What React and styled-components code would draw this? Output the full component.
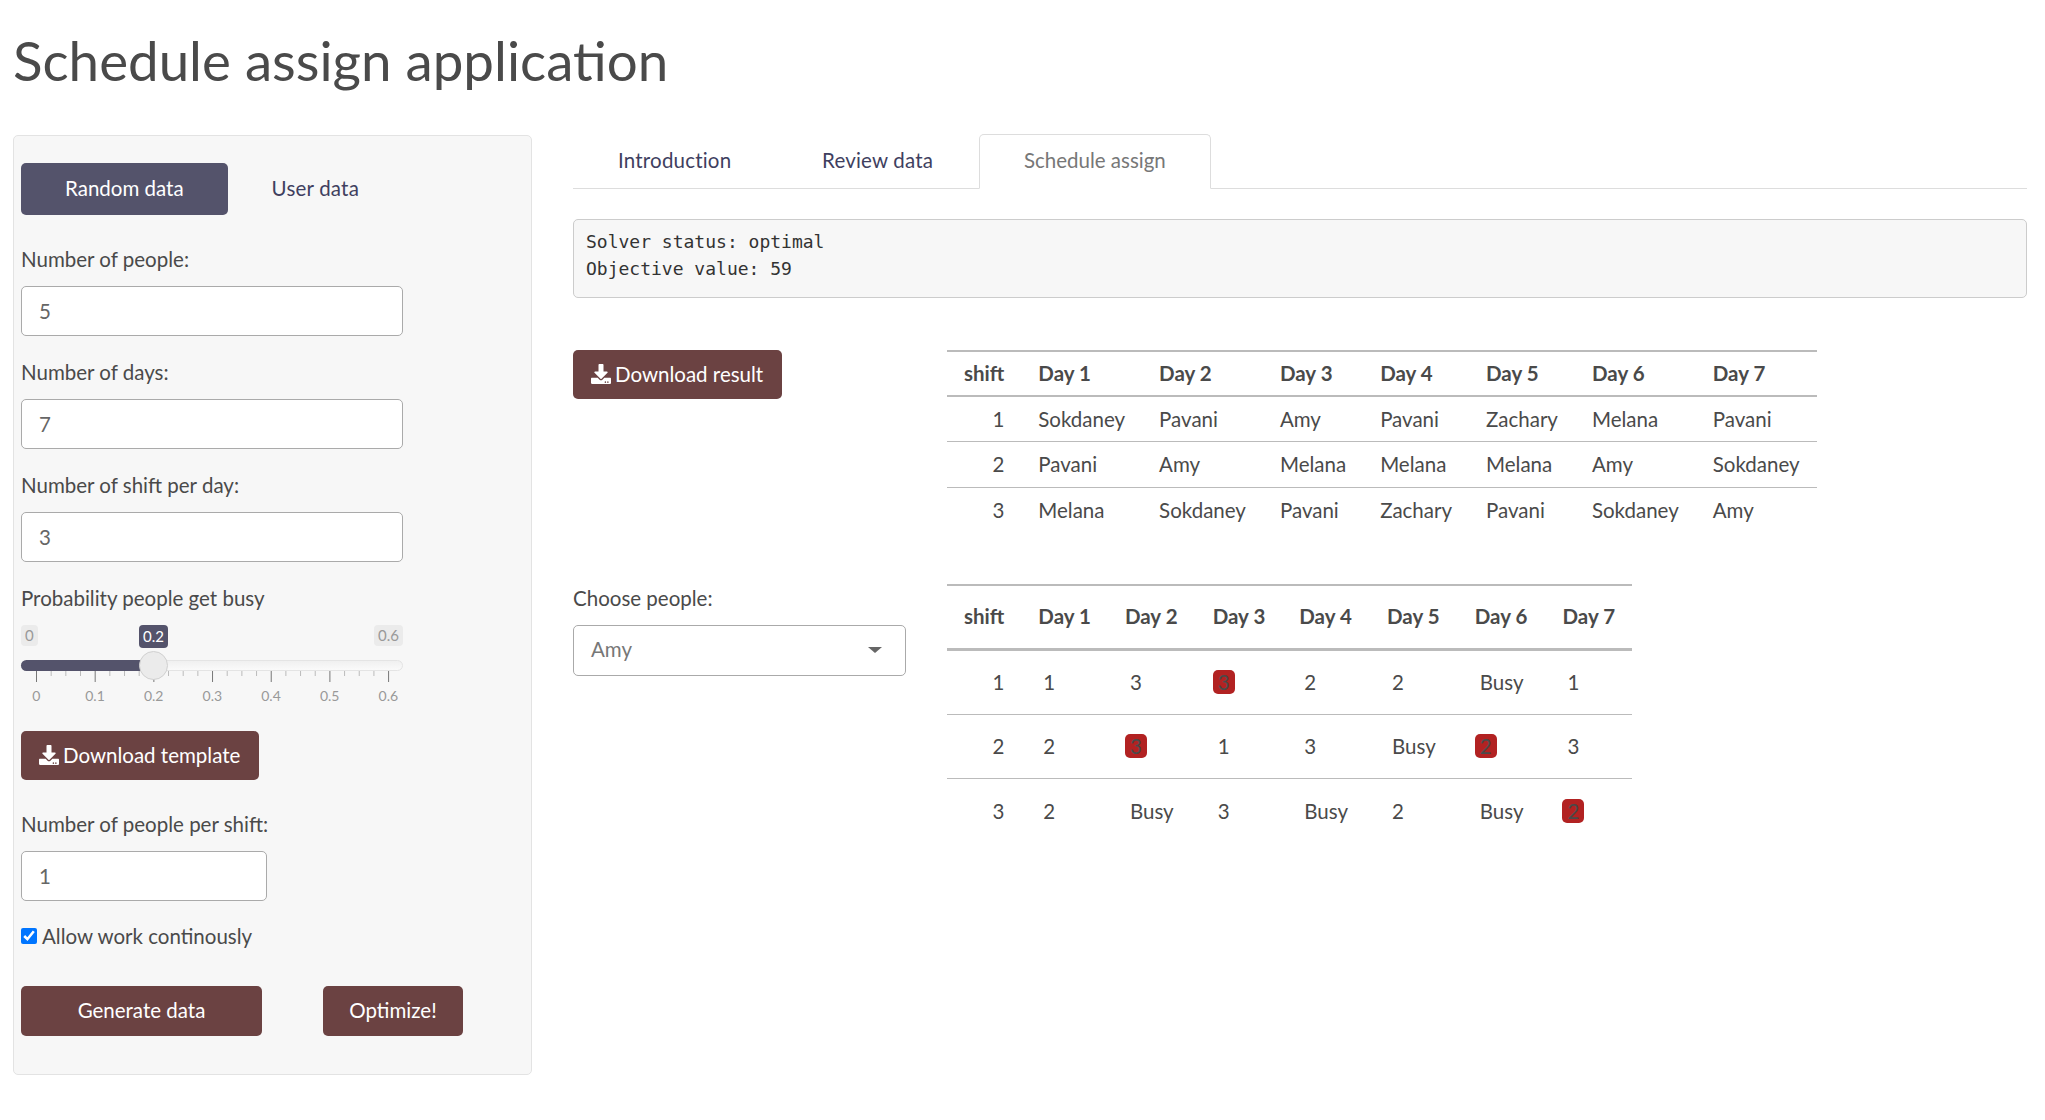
import React from "react";
import styled, { createGlobalStyle } from "styled-components";
import { FaDownload } from "react-icons/fa";

const scheduleHead = ["shift", "Day 1", "Day 2", "Day 3", "Day 4", "Day 5", "Day 6", "Day 7"];
const scheduleRows = [
    [1, "Sokdaney", "Pavani", "Amy", "Pavani", "Zachary", "Melana", "Pavani"],
    [2, "Pavani", "Amy", "Melana", "Melana", "Melana", "Amy", "Sokdaney"],
    [3, "Melana", "Sokdaney", "Pavani", "Zachary", "Pavani", "Sokdaney", "Amy"],
];
// "!" marks a cell that clashes with the preference
const preferenceRows = [
    [1, "1", "3", "3!", "2", "2", "Busy", "1"],
    [2, "2", "3!", "1", "3", "Busy", "2!", "3"],
    [3, "2", "Busy", "3", "Busy", "2", "Busy", "2!"],
];
const sliderLabels = ["0", "0.1", "0.2", "0.3", "0.4", "0.5", "0.6"];

function SliderTicks() {
    const ticks = [];
    for (let i = 0; i <= 24; i++) {
        const major = i % 4 === 0;
        const x = 15.5 + i * 14.67;
        ticks.push(
            <line key={i} x1={x} x2={x} y1="0" y2={major ? 11 : 5} stroke={major ? "#777" : "#bbb"} strokeWidth="1" />
        );
    }
    return (
        <TickSvg width="382" height="12" viewBox="0 0 382 12">
            {ticks}
        </TickSvg>
    );
}

function Field({ label, value, narrow }) {
    return (
        <FieldGroup>
            <FieldLabel>{label}</FieldLabel>
            <TextInput $narrow={narrow} defaultValue={value} />
        </FieldGroup>
    );
}

function App() {
    return (
        <Page>
            <GlobalStyle />
            <PageTitle>Schedule assign application</PageTitle>
            <Columns>
                <SidePanel>
                    <PillRow>
                        <Pill $active>Random data</Pill>
                        <Pill>User data</Pill>
                    </PillRow>
                    <Field label="Number of people:" value="5" />
                    <Field label="Number of days:" value="7" />
                    <Field label="Number of shift per day:" value="3" />
                    <FieldLabel>Probability people get busy</FieldLabel>
                    <Slider>
                        <LimitRow>
                            <Limit>0</Limit>
                            <Limit>0.6</Limit>
                        </LimitRow>
                        <SliderValue>0.2</SliderValue>
                        <Track>
                            <TrackFill />
                            <Handle />
                        </Track>
                        <SliderTicks />
                        <TickLabels>
                            {sliderLabels.map((l) => <TickLabel key={l}>{l}</TickLabel>)}
                        </TickLabels>
                    </Slider>
                    <IconButton>
                        <FaDownload size={20} />
                        Download template
                    </IconButton>
                    <FieldGroup $top={30}>
                        <FieldLabel>Number of people per shift:</FieldLabel>
                        <TextInput $narrow defaultValue="1" />
                    </FieldGroup>
                    <CheckRow>
                        <input type="checkbox" defaultChecked />
                        Allow work continously
                    </CheckRow>
                    <ActionRow>
                        <ActionButton $width={241}>Generate data</ActionButton>
                        <ActionButton $width={140}>Optimize!</ActionButton>
                    </ActionRow>
                </SidePanel>

                <MainColumn>
                    <TabBar>
                        <Tab>Introduction</Tab>
                        <Tab>Review data</Tab>
                        <Tab $active>Schedule assign</Tab>
                    </TabBar>
                    <SolverOutput>{"Solver status: optimal\nObjective value: 59"}</SolverOutput>
                    <ResultRow>
                        <LeftSlot>
                            <IconButton>
                                <FaDownload size={20} />
                                Download result
                            </IconButton>
                        </LeftSlot>
                        <DataTable>
                            <thead>
                                <tr>
                                    {scheduleHead.map((h) => <HeadCell key={h} $right={h === "shift"}>{h}</HeadCell>)}
                                </tr>
                            </thead>
                            <tbody>
                                {scheduleRows.map((row) => (
                                    <BodyRow key={row[0]}>
                                        {row.map((c, i) => <BodyCell key={i} $right={i === 0}>{c}</BodyCell>)}
                                    </BodyRow>
                                ))}
                            </tbody>
                        </DataTable>
                    </ResultRow>
                    <PreferenceRow>
                        <LeftSlot>
                            <FieldLabel>Choose people:</FieldLabel>
                            <PeopleSelect>
                                Amy
                                <Caret />
                            </PeopleSelect>
                        </LeftSlot>
                        <DataTable $tall>
                            <thead>
                                <tr>
                                    {scheduleHead.map((h) => <HeadCell key={h} $right={h === "shift"}>{h}</HeadCell>)}
                                </tr>
                            </thead>
                            <tbody>
                                {preferenceRows.map((row) => (
                                    <BodyRow key={row[0]}>
                                        {row.map((c, i) => (
                                            <BodyCell key={i} $right={i === 0}>
                                                {i === 0 ? c : (
                                                    <Mark $clash={c.endsWith("!")}>{c.replace("!", "")}</Mark>
                                                )}
                                            </BodyCell>
                                        ))}
                                    </BodyRow>
                                ))}
                            </tbody>
                        </DataTable>
                    </PreferenceRow>
                </MainColumn>
            </Columns>
        </Page>
    );
}

const GlobalStyle = createGlobalStyle`
    html, body {
        margin: 0;
        background: #fff;
    }
    * {
        box-sizing: border-box;
    }
`;

const Page = styled.div`
    padding: 26px 18px 0 13px;
    font-family: Lato, "Liberation Sans", sans-serif;
    font-size: 20.5px;
    line-height: 28px;
    color: #4a4a4a;
`;

const PageTitle = styled.h1`
    margin: 0 0 40px;
    font-size: 54.7px;
    line-height: 68px;
    font-weight: 400;
    color: #4a4a4a;
`;

const Columns = styled.div`
    display: flex;
    align-items: flex-start;
    gap: 41px;
`;

const SidePanel = styled.div`
    width: 519px;
    margin-top: 1px;
    padding: 27px 7px 38px;
    background: #f7f7f7;
    border: 1px solid #e3e3e3;
    border-radius: 5px;
`;

const PillRow = styled.div`
    display: flex;
    gap: 3px;
    margin-bottom: 30px;
`;

const Pill = styled.div`
    height: 52px;
    padding: 0 ${(p) => (p.$active ? 44 : 41)}px 2px;
    display: flex;
    align-items: center;
    border-radius: 5px;
    background: ${(p) => (p.$active ? "#54536b" : "transparent")};
    color: ${(p) => (p.$active ? "#fff" : "#3f3f5f")};
    letter-spacing: ${(p) => (p.$active ? 0 : 0.2)}px;
`;

const FieldGroup = styled.div`
    margin-top: ${(p) => p.$top || 0}px;
    margin-bottom: 22px;
`;

const FieldLabel = styled.div`
    height: 28px;
    margin-bottom: 13px;
    color: #4a4a4a;
`;

const TextInput = styled.input`
    display: block;
    width: ${(p) => (p.$narrow ? 246 : 382)}px;
    height: 50px;
    padding: 0 17px;
    border: 1px solid #aaa;
    border-radius: 5px;
    background: #fff;
    font: inherit;
    color: #666;
    outline: none;
`;

const Slider = styled.div`
    position: relative;
    width: 382px;
    height: 80px;
    margin-top: 1px;
    margin-bottom: 26px;
`;

const LimitRow = styled.div`
    display: flex;
    justify-content: space-between;
    height: 35px;
`;

const Limit = styled.span`
    height: 21px;
    padding: 0 4px;
    border-radius: 4px;
    background: #ebebeb;
    color: #999;
    font-size: 15px;
    line-height: 21px;
`;

const SliderValue = styled.span`
    position: absolute;
    left: 118px;
    top: 0;
    height: 23px;
    padding: 0 4px;
    border-radius: 4px;
    background: #54536b;
    color: #fff;
    font-size: 15px;
    line-height: 23px;
`;

const Track = styled.div`
    position: relative;
    height: 11px;
    border: 1px solid #e4e4e4;
    border-radius: 6px;
    background: linear-gradient(#f0f0f0, #fafafa);
`;

const TrackFill = styled.div`
    width: 132px;
    height: 11px;
    margin: -1px;
    border-radius: 6px 0 0 6px;
    background: #54536b;
`;

const Handle = styled.div`
    position: absolute;
    left: 117px;
    top: -10px;
    width: 29px;
    height: 29px;
    border: 1px solid #d0d0d0;
    border-radius: 50%;
    background: #ebebeb;
`;

const TickSvg = styled.svg`
    display: block;
`;

const TickLabels = styled.div`
    display: grid;
    grid-template-columns: repeat(7, 58.68px);
    margin-left: -14px;
    margin-top: 4px;
`;

const TickLabel = styled.span`
    text-align: center;
    color: #999;
    font-size: 14px;
    line-height: 18px;
`;

const IconButton = styled.button`
    display: inline-flex;
    align-items: center;
    gap: 4px;
    height: 49px;
    padding: 0 19px 2px 18px;
    border: none;
    border-radius: 5px;
    background: #6b4242;
    color: #fff;
    font: inherit;
`;

const CheckRow = styled.label`
    display: flex;
    align-items: center;
    gap: 5px;
    height: 28px;
    margin-top: -1px;
    margin-bottom: 36px;

    input {
        width: 16px;
        height: 16px;
        margin: 0;
    }
`;

const ActionRow = styled.div`
    display: flex;
    gap: 61px;
`;

const ActionButton = styled.button`
    width: ${(p) => p.$width}px;
    height: 50px;
    padding: 0 0 2px;
    border: none;
    border-radius: 5px;
    background: #6b4242;
    color: #fff;
    font: inherit;
`;

const MainColumn = styled.div`
    flex: 1;
    min-width: 0;
`;

const TabBar = styled.div`
    display: flex;
    gap: 3px;
    height: 55px;
    margin-bottom: 30px;
    border-bottom: 1px solid #ddd;
`;

const Tab = styled.div`
    height: 55px;
    padding: 0 ${(p) => (p.$active ? 44 : 41.7)}px 4px 44px;
    display: flex;
    align-items: center;
    color: ${(p) => (p.$active ? "#777" : "#3f3f5f")};
    letter-spacing: ${(p) => (p.$active ? 0 : 0.2)}px;
    background: ${(p) => (p.$active ? "#fff" : "transparent")};
    border: 1px solid ${(p) => (p.$active ? "#ddd" : "transparent")};
    border-bottom-color: ${(p) => (p.$active ? "#fff" : "transparent")};
    border-radius: 5px 5px 0 0;
`;

const SolverOutput = styled.pre`
    height: 79px;
    margin: 0 0 52px;
    padding: 8px 12px;
    background: #f7f7f7;
    border: 1px solid #ccc;
    border-radius: 5px;
    font-family: "DejaVu Sans Mono", monospace;
    font-size: 18px;
    line-height: 27px;
    color: #333;
`;

const ResultRow = styled.div`
    display: flex;
    align-items: flex-start;
`;

const PreferenceRow = styled(ResultRow)`
    margin-top: 51px;
`;

const LeftSlot = styled.div`
    width: 374px;
    flex: none;
`;

const PeopleSelect = styled.div`
    position: relative;
    width: 333px;
    height: 51px;
    padding: 0 17px 3px;
    display: flex;
    align-items: center;
    background: #fff;
    border: 1px solid #aaa;
    border-radius: 5px;
    color: #777;
`;

const Caret = styled.span`
    position: absolute;
    right: 23px;
    top: 21px;
    border-style: solid;
    border-width: 6px 7px 0;
    border-color: #666 transparent transparent;
`;

const DataTable = styled.table`
    border-collapse: collapse;
    border-top: 2px solid #bbb;

    thead tr {
        height: ${(p) => (p.$tall ? 65 : 45)}px;
        border-bottom: ${(p) => (p.$tall ? 3 : 2)}px solid #bbb;
    }
    tbody tr {
        height: ${(p) => (p.$tall ? 64.5 : 45.6)}px;
    }
    tbody tr:last-child {
        border-bottom: none;
    }
`;

const HeadCell = styled.th`
    padding: 0 17px 2px;
    text-align: ${(p) => (p.$right ? "right" : "left")};
    font-weight: 700;
`;

const BodyRow = styled.tr`
    border-bottom: 1px solid #bbb;
`;

const BodyCell = styled.td`
    padding: 0 17px 1px;
    text-align: ${(p) => (p.$right ? "right" : "left")};
    white-space: nowrap;
`;

const Mark = styled.span`
    display: inline-block;
    padding: 0 5px;
    line-height: 24px;
    border-radius: 5px;
    background: ${(p) => (p.$clash ? "#b22222" : "transparent")};
`;

export default App;
